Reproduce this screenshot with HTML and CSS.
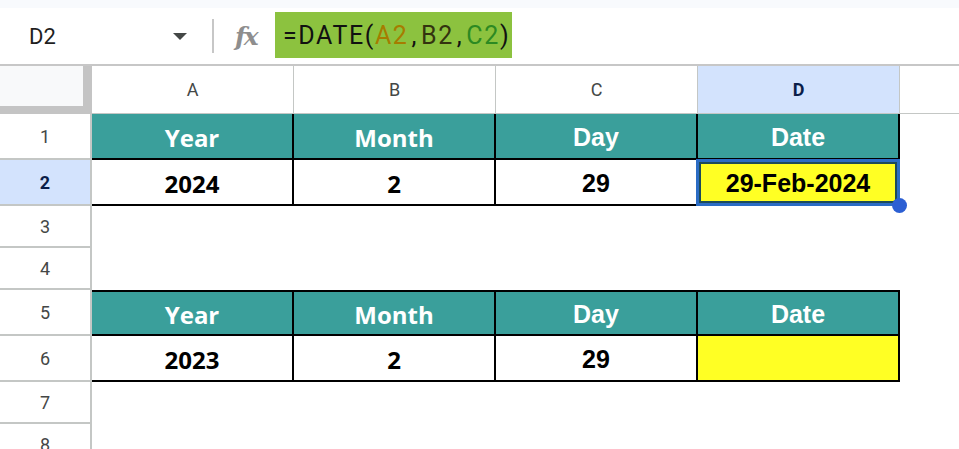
FILE: index.html
```html
<!DOCTYPE html>
<html>
<head>
<meta charset="utf-8">
<link rel="stylesheet" href="styles.css">
</head>
<body>
<div class="top-strip"></div>
<div class="formula-bar">
  <div class="namebox"><span class="ref">D2</span><span class="caret"></span></div>
  <div class="divider"></div>
  <div class="fx">fx</div>
  <div class="formula">=DATE(<span class="r1">A2</span><span class="sep">,</span><span class="r2">B2</span><span class="sep">,</span><span class="r3">C2</span>)</div>
</div>
<div class="sheet">
  <div class="corner"><div class="corner-inner"></div></div>
  <div class="colh">A</div>
  <div class="colh">B</div>
  <div class="colh">C</div>
  <div class="colh sel">D</div>
  <div class="colh rest"></div>

  <div class="rowh">1</div>
  <div class="c head cal">Year</div>
  <div class="c head cal">Month</div>
  <div class="c head ari">Day</div>
  <div class="c head ari">Date</div>
  <div class="c blank"></div>

  <div class="rowh sel">2</div>
  <div class="c data cal">2024</div>
  <div class="c data cal">2</div>
  <div class="c data ari">29</div>
  <div class="c data ari yellow active">29-Feb-2024<span class="handle"></span></div>
  <div class="c blank"></div>

  <div class="rowh">3</div>
  <div class="c blank"></div><div class="c blank"></div><div class="c blank"></div><div class="c blank"></div><div class="c blank"></div>

  <div class="rowh">4</div>
  <div class="c blank"></div><div class="c blank"></div><div class="c blank"></div><div class="c blank"></div><div class="c blank"></div>

  <div class="rowh">5</div>
  <div class="c head top cal">Year</div>
  <div class="c head top cal">Month</div>
  <div class="c head top ari">Day</div>
  <div class="c head top ari">Date</div>
  <div class="c blank"></div>

  <div class="rowh">6</div>
  <div class="c data cal">2023</div>
  <div class="c data cal">2</div>
  <div class="c data ari">29</div>
  <div class="c data yellow"></div>
  <div class="c blank"></div>

  <div class="rowh">7</div>
  <div class="c blank"></div><div class="c blank"></div><div class="c blank"></div><div class="c blank"></div><div class="c blank"></div>

  <div class="rowh">8</div>
  <div class="c blank"></div><div class="c blank"></div><div class="c blank"></div><div class="c blank"></div><div class="c blank"></div>
</div>
</body>
</html>
```

FILE: styles.css
```css
* { box-sizing: border-box; }
html, body { margin: 0; padding: 0; background: #fff; overflow: hidden; }
body { width: 959px; height: 449px; font-family: Roboto, "Liberation Sans", sans-serif; }

.top-strip { height: 8px; background: #f8fafd; }

.formula-bar {
  height: 58px;
  display: flex;
  align-items: center;
  border-bottom: 2px solid #c7c7c7;
  background: #fff;
}
.namebox {
  width: 200px;
  display: flex;
  align-items: center;
  justify-content: space-between;
  padding-left: 29px;
  padding-right: 13px;
  font-size: 22px;
  color: #1f1f1f;
}
.caret {
  width: 0; height: 0;
  border-left: 7px solid transparent;
  border-right: 7px solid transparent;
  border-top: 7px solid #444746;
}
.divider { width: 2px; height: 34px; background: #c7c7c7; margin-left: 12px; }
.fx {
  font-family: "DejaVu Serif", "Liberation Serif", serif;
  font-style: italic;
  font-weight: bold;
  font-size: 25px;
  color: #8e8e8e;
  margin-left: 21px;
  width: 40px;
  letter-spacing: -2px;
}
.formula {
  height: 46px;
  width: 237px;
  margin-top: -2px;
  background: #8cc23f;
  display: flex;
  align-items: center;
  padding-left: 8px;
  font-size: 25px;
  letter-spacing: 1.6px;
  color: #111;
}
.formula .sep { padding: 0 3px; }
.formula .r1 { color: #a67c00; }
.formula .r2 { color: #33330f; }
.formula .r3 { color: #2c8a22; }

.sheet {
  display: grid;
  grid-template-columns: 92px 202px 202px 202px 202px 1fr;
  grid-template-rows: 48px 46px 46px 42px 42px 46px 46px 42px 42px;
}

.corner { background: #c4c4c4; padding: 0 9px 8px 0; }
.corner-inner { background: #f8f9fa; height: 100%; }

.colh {
  display: flex; align-items: center; justify-content: center;
  font-size: 18px; color: #444746;
  border-right: 1px solid #c4c7c5;
  border-bottom: 1px solid #c4c7c5;
}
.colh.sel { background: #d3e3fd; color: #0b1e49; font-weight: bold; }
.colh.rest { border-right: none; }

.rowh {
  display: flex; align-items: center; justify-content: center;
  font-size: 18px; color: #444746;
  border-right: 2px solid #c4c7c5;
  border-bottom: 2px solid #c4c7c5;
}
.rowh.sel { background: #d3e3fd; color: #0b1e49; font-weight: bold; }

.c { display: flex; align-items: center; justify-content: center; padding-top: 3px; }
.c.cal { font-family: "Open Sans", sans-serif; font-weight: bold; font-size: 24px; }
.c.ari { font-family: "Liberation Sans", Arial, sans-serif; font-weight: bold; font-size: 25px; }
.c.head {
  background: #3a9f9b; color: #fff;
  border-right: 2px solid #000;
  border-bottom: 2px solid #000;
}
.c.head.top { border-top: 2px solid #000; }
.c.data {
  background: #fff; color: #000;
  border-right: 2px solid #000;
  border-bottom: 2px solid #000;
}
.c.yellow { background: #ffff24; }
.c.blank { background: #fff; }

.c.active { position: relative; }
.c.active::after {
  content: "";
  position: absolute;
  left: -2px; top: -1px; right: -2px; bottom: -2px;
  border: 3px solid #2b6cc4;
  box-shadow: inset 0 0 0 2px #1d4b5a;
}
.handle {
  position: absolute;
  right: -9px; bottom: -9px;
  width: 15px; height: 15px;
  border-radius: 50%;
  background: #2c5fd3;
  z-index: 2;
}
```
